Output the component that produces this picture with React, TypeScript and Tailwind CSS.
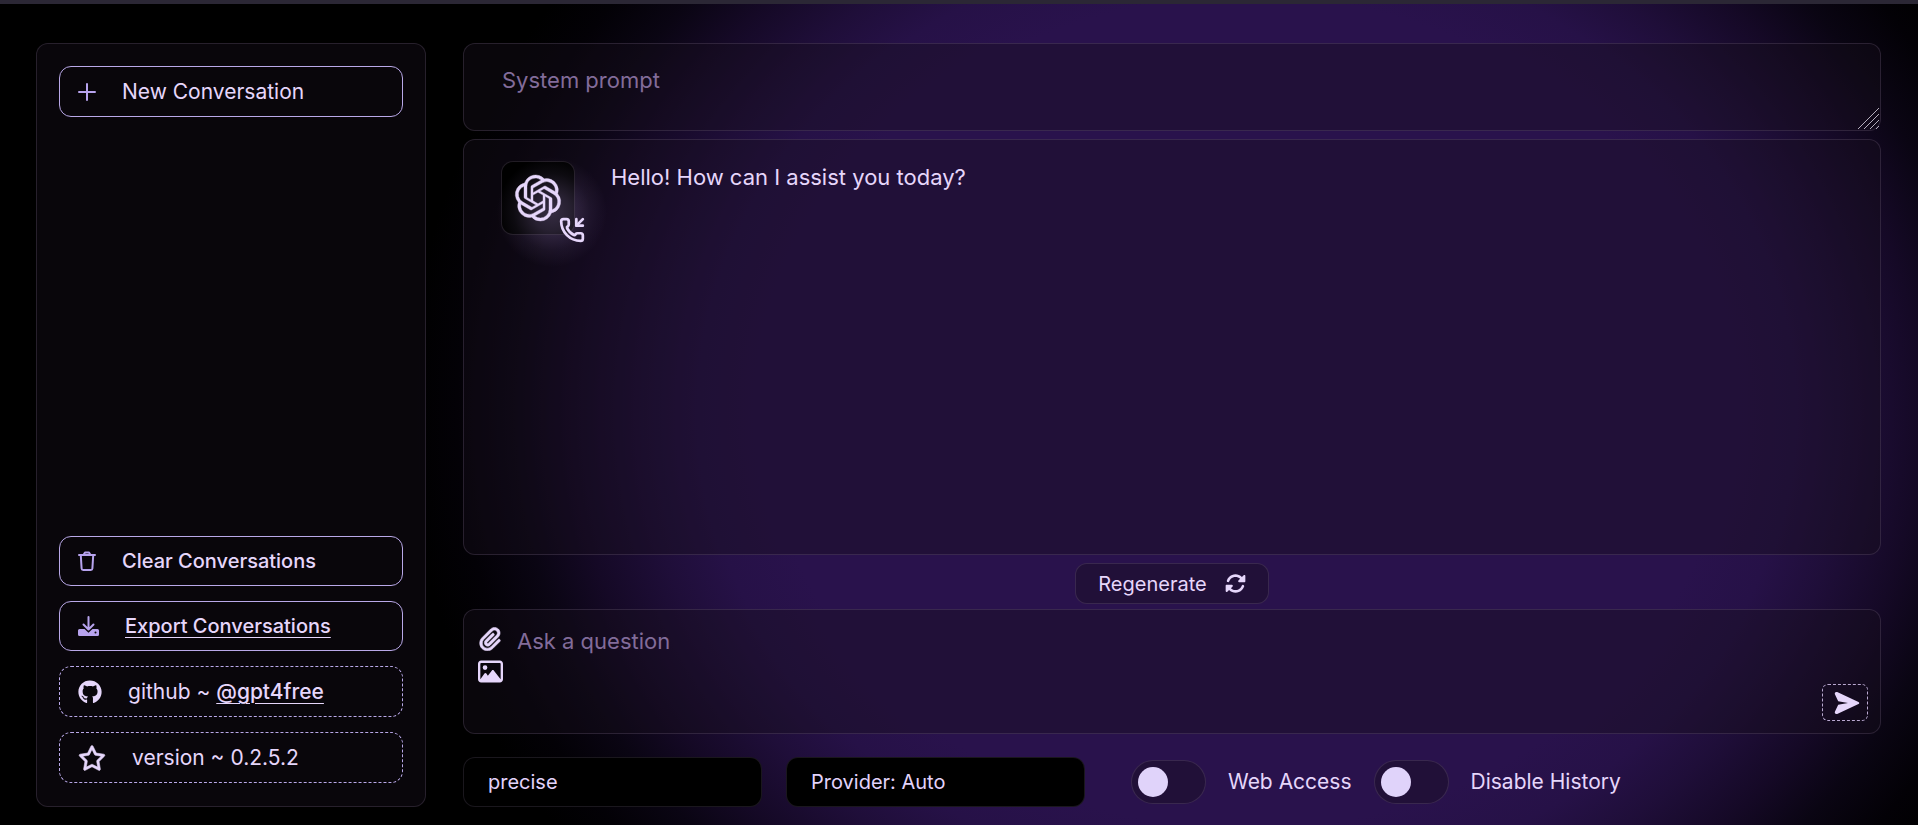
import { useState } from "react";
import { PhoneIncoming } from "lucide-react";
import { FaGithub, FaPaperclip, FaRegImage, FaRegStar, FaRotate } from "react-icons/fa6";
import { SiOpenai } from "react-icons/si";

const PANEL = "rounded-xl border border-[#84719040] bg-[#16101b66]";
const SIDE_ITEM =
  "flex w-full items-center gap-[26px] rounded-xl border border-[#b9a8e8] px-[18px] text-left";
const SELECT =
  "h-[50px] w-[299px] appearance-none rounded-xl border border-[#84719033] bg-black px-6 text-xl text-[#e2d3fb] outline-none";

function PlusIcon() {
  return (
    <svg width="18" height="20" viewBox="0 0 18 20" className="shrink-0">
      <path d="M9 2v16M1 10h16" stroke="currentColor" strokeWidth="2" strokeLinecap="round" />
    </svg>
  );
}

function TrashIcon() {
  return (
    <svg
      width="18"
      height="20"
      viewBox="0 0 18 20"
      fill="none"
      stroke="currentColor"
      strokeWidth="2"
      strokeLinecap="round"
      strokeLinejoin="round"
      className="shrink-0"
    >
      <path d="M1 4h16M5.500 4 7 1.500h4L12.500 4" />
      <path d="M2.800 4.500 3.600 17.500a1.600 1.600 0 0 0 1.600 1.500h7.600a1.600 1.600 0 0 0 1.600-1.500L15.200 4.500" />
    </svg>
  );
}

function DownloadIcon() {
  return (
    <svg width="21" height="20" viewBox="0 0 21 20" className="shrink-0">
      <path
        d="M10.500 1v12M5.500 8.500l5 5 5-5"
        fill="none"
        stroke="currentColor"
        strokeWidth="2"
        strokeLinecap="round"
        strokeLinejoin="round"
      />
      <path
        fill="currentColor"
        fillRule="evenodd"
        d="M1.500 13h5l4 3.800 4-3.800h5A1.500 1.500 0 0 1 21 14.500v4a1.500 1.500 0 0 1-1.500 1.500h-18A1.500 1.500 0 0 1 0 18.500v-4A1.500 1.500 0 0 1 1.500 13zM17.500 15.600a1 1 0 1 0 0 2 1 1 0 0 0 0-2z"
      />
    </svg>
  );
}

function SendIcon() {
  return (
    <svg width="26" height="24" viewBox="0 0 26 24" fill="currentColor">
      <path d="M3.200 1.100 24.500 10.900a1.200 1.200 0 0 1 0 2.200L3.200 22.900C1.500 23.600.2 22 1 20.500L4.200 13.700 14 12 4.200 10.300 1 3.500C.2 2 1.500.4 3.200 1.100z" />
    </svg>
  );
}

function Sidebar() {
  return (
    <aside
      className={`${PANEL} flex w-[390px] shrink-0 flex-col justify-between px-[22px] pt-[22px] pb-[23px]`}
    >
      <button className={`${SIDE_ITEM} h-[51px]`}>
        <span className="text-[#b7a3ee]">
          <PlusIcon />
        </span>
        <span className="text-[21px]">New Conversation</span>
      </button>

      <div className="flex flex-col gap-[15px]">
        <button className={`${SIDE_ITEM} h-[50px] text-xl font-medium`}>
          <span className="text-[#b7a3ee]">
            <TrashIcon />
          </span>
          Clear Conversations
        </button>
        <div className={`${SIDE_ITEM} h-[50px] text-xl font-medium`}>
          <span className="text-[#b7a3ee]">
            <DownloadIcon />
          </span>
          <a href="#export" className="underline decoration-1 underline-offset-4">
            Export Conversations
          </a>
        </div>
        <div className={`${SIDE_ITEM} h-[51px] border-dashed text-[21px]`}>
          <FaGithub className="size-6" />
          <span>
            github ~{" "}
            <a href="#github" className="font-medium underline decoration-1 underline-offset-4">
              @gpt4free
            </a>
          </span>
        </div>
        <div className={`${SIDE_ITEM} h-[51px] border-dashed text-[21px]`}>
          <FaRegStar className="size-7" stroke="currentColor" strokeWidth={12} />
          <span>version ~ 0.2.5.2</span>
        </div>
      </div>
    </aside>
  );
}

function Toggle({ id, label }: { id: string; label: string }) {
  const [on, setOn] = useState(false);

  return (
    <div className="flex items-center gap-[22px]">
      <input
        id={id}
        type="checkbox"
        checked={on}
        onChange={() => setOn(!on)}
        className="h-11 w-[75px] appearance-none rounded-full border border-[#84719040] bg-[#16101b66] p-1.5 before:block before:size-[30px] before:rounded-full before:bg-[#e0d3fa] checked:before:ml-auto"
      />
      <label htmlFor={id}>{label}</label>
    </div>
  );
}

export default function App() {
  return (
    <div className="relative isolate flex min-h-screen flex-col overflow-hidden bg-black font-['Inter',sans-serif] text-[#e6d6fb]">
      {/* purple glow behind the chat */}
      <div className="absolute inset-0 -z-10 bg-[radial-gradient(840px_730px_at_65%_50%,#29124c_57%,#261147_65%,#1f0e39_72%,#150926_80%,#0a0513_87%,#030106_94%,#000_100%)]" />
      <div className="h-1 bg-[#2b2735]" />

      <div className="flex flex-1 gap-[37px] pt-[39px] pr-[37px] pb-[18px] pl-9">
        <Sidebar />

        <main className="flex min-w-0 flex-1 flex-col">
          <div className="relative">
            <textarea
              aria-label="System prompt"
              placeholder="System prompt"
              className={`${PANEL} block h-[88px] w-full resize-none px-[38px] py-5 text-[22px] leading-8 outline-none placeholder:text-[#826c9a]`}
            />
            <svg
              className="absolute right-0.5 bottom-0.5"
              width="21"
              height="21"
              viewBox="0 0 21 21"
              stroke="#b5aebd"
              strokeWidth="1"
            >
              <path d="M0 21 21 0M6 21 21 6M12 21 21 12M18 21 21 18" />
            </svg>
          </div>

          <section className={`${PANEL} mt-2 flex flex-1 items-start gap-9 px-[37px] py-[21px]`}>
            <div className="relative">
              <div className="size-[74px] rounded-xl border border-[#84719040] bg-black" />
              <div className="absolute -right-8 -bottom-8 size-[110px] bg-[radial-gradient(closest-side,#9a7fc059,#9a7fc040_35%,#9a7fc016_70%,#9a7fc000)]" />
              <SiOpenai
                className="absolute inset-[14px] size-[46px] overflow-visible"
                stroke="currentColor"
                strokeWidth={0.2}
              />
              <PhoneIncoming className="absolute -right-2.5 -bottom-2 size-[26px]" strokeWidth={2.5} />
            </div>
            <p className="text-[22px] leading-8">Hello! How can I assist you today?</p>
          </section>

          <button
            className={`${PANEL} mt-2 flex h-[41px] items-center gap-[18px] self-center px-[22px] text-xl`}
          >
            Regenerate
            <FaRotate className="size-[21px]" />
          </button>

          <section className={`${PANEL} mt-[5px] flex h-[125px] gap-[14px] pt-[15px] pr-3 pb-3 pl-[14px]`}>
            <div className="flex flex-col gap-2 pt-0.5">
              <button aria-label="Attach file">
                <FaPaperclip className="size-6" stroke="currentColor" strokeWidth={12} />
              </button>
              <button aria-label="Attach image">
                <FaRegImage className="size-[25px]" />
              </button>
            </div>
            <textarea
              aria-label="Ask a question"
              placeholder="Ask a question"
              className="min-w-0 flex-1 resize-none text-[22px] leading-8 outline-none placeholder:text-[#826c9a]"
            />
            <button
              aria-label="Send"
              className="flex h-[37px] w-[46px] items-center justify-center self-end rounded-md border border-dashed border-[#b9a8d0] pl-1"
            >
              <SendIcon />
            </button>
          </section>

          <div className="mt-[23px] flex items-center gap-6 text-[21px]">
            <select aria-label="Mode" className={SELECT}>
              <option>precise</option>
              <option>balanced</option>
              <option>creative</option>
            </select>
            <select aria-label="Provider" className={SELECT}>
              <option>Provider: Auto</option>
            </select>
            <div className="ml-[22px] flex items-center gap-[22px]">
              <Toggle id="web-access" label="Web Access" />
              <Toggle id="disable-history" label="Disable History" />
            </div>
          </div>
        </main>
      </div>
    </div>
  );
}
